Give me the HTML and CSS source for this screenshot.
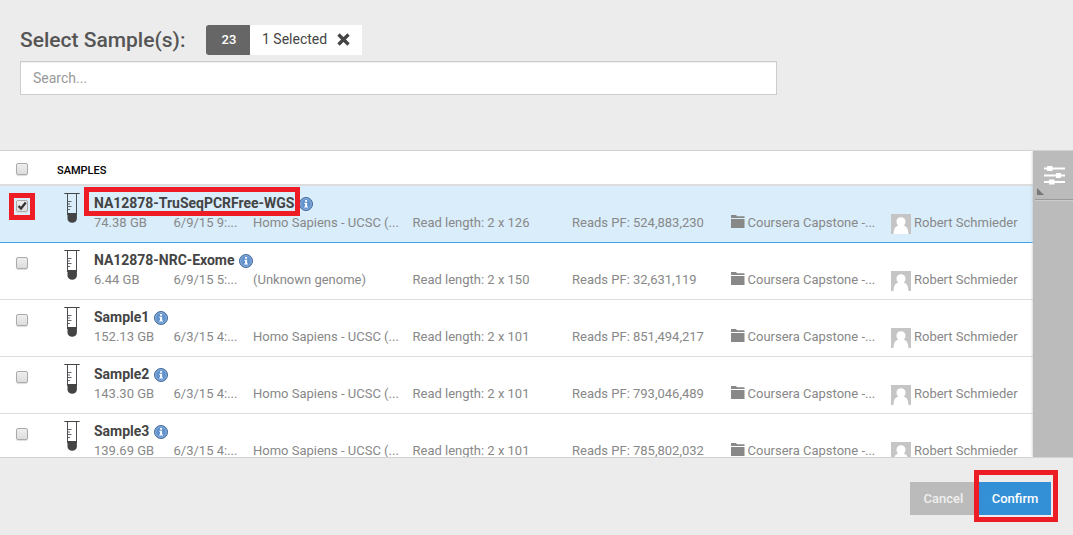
FILE: index.html
```
<!DOCTYPE html>
<html lang="en">
<head>
<meta charset="utf-8">
<title>Select Sample(s)</title>
<link rel="stylesheet" href="styles.css">
</head>
<body>
<svg class="defs" width="0" height="0">
  <symbol id="tube" viewBox="0 0 16 31">
    <path d="M.3 1.500H15.700" stroke="#444" stroke-width="1"/>
    <path d="M3.500 2V23M12.500 2V23" stroke="#4a4f55" stroke-width="1"/>
    <path d="M3.500 21H12.900V26.500a4.700 4.300 0 0 1-9.400 0z" fill="#444"/>
    <path d="M4 9.500H7.500M4 12H6M4 14.500H7.500M4 17.500H6" stroke="#555" stroke-width=".9"/>
  </symbol>
  <symbol id="info" viewBox="0 0 14 14">
    <circle cx="7" cy="7" r="6.500" fill="#4d7fbb" stroke="#456b9c" stroke-width="1"/>
    <circle cx="7" cy="7" r="5.400" fill="#6093cd" stroke="#a9c3e2" stroke-width=".7"/>
    <path d="M6.100 3H8.100V4.700H6.100zM5.300 5.700h2.800v3.700h.9v1.200H5.200V9.400h.9V6.800h-.8z" fill="#fff"/>
  </symbol>
  <symbol id="folder" viewBox="0 0 14 13">
    <path d="M0 0H5L6 1.200H13.500V3H0zM0 4H13.500V13H0z" fill="#888"/>
  </symbol>
  <symbol id="avatar" viewBox="0 0 20 20">
    <path d="M0 0H20V20H0z" fill="#c5c5c5"/>
    <path d="M10 3.200c2.800 0 4.500 1.800 4.500 4.300 0 1.800-.7 3.200-1.700 4.100 2.600.9 4.400 2.600 4.700 8.400H2.500c.3-5.800 2.100-7.500 4.700-8.400-1-.9-1.700-2.300-1.700-4.100C5.500 5 7.200 3.200 10 3.200z" fill="#fff"/>
  </symbol>
</svg>
<div class="dialog">
  <header class="head">
    <div class="title-line">
      <h1 class="title">Select Sample(s):</h1>
      <div class="counter">
        <span class="total">23</span>
        <span class="selected">1 Selected
          <svg class="clear" viewBox="0 0 13 13"><path d="M1.500 1.500L11.500 11.500M11.500 1.500L1.500 11.500" stroke="#444" stroke-width="3.300"/></svg>
        </span>
      </div>
    </div>
    <input class="search" type="text" placeholder="Search...">
  </header>
  <main class="body">
    <div class="list">
      <div class="list-head"><span class="box"></span><span class="label">SAMPLES</span></div>
      <div class="row active">
        <span class="box"><svg class="tick" viewBox="0 0 12 12"><path d="M2.500 6L5 8.500L9.800 2.500" fill="none" stroke="#333" stroke-width="2.300"/></svg></span>
        <svg class="tube"><use href="#tube"/></svg>
        <div class="info">
          <div class="name">NA12878-TruSeqPCRFree-WGS<svg class="i"><use href="#info"/></svg></div>
          <div class="meta"><span>74.38 GB</span><span>6/9/15 9:...</span><span>Homo Sapiens - UCSC (...</span><span>Read length: 2 x 126</span><span>Reads PF: 524,883,230</span><span><svg class="folder"><use href="#folder"/></svg>Coursera Capstone -...</span><span><svg class="avatar"><use href="#avatar"/></svg>Robert Schmieder</span></div>
        </div>
      </div>
      <div class="row">
        <span class="box"></span>
        <svg class="tube"><use href="#tube"/></svg>
        <div class="info">
          <div class="name">NA12878-NRC-Exome<svg class="i"><use href="#info"/></svg></div>
          <div class="meta"><span>6.44 GB</span><span>6/9/15 5:...</span><span>(Unknown genome)</span><span>Read length: 2 x 150</span><span>Reads PF: 32,631,119</span><span><svg class="folder"><use href="#folder"/></svg>Coursera Capstone -...</span><span><svg class="avatar"><use href="#avatar"/></svg>Robert Schmieder</span></div>
        </div>
      </div>
      <div class="row">
        <span class="box"></span>
        <svg class="tube"><use href="#tube"/></svg>
        <div class="info">
          <div class="name">Sample1<svg class="i"><use href="#info"/></svg></div>
          <div class="meta"><span>152.13 GB</span><span>6/3/15 4:...</span><span>Homo Sapiens - UCSC (...</span><span>Read length: 2 x 101</span><span>Reads PF: 851,494,217</span><span><svg class="folder"><use href="#folder"/></svg>Coursera Capstone -...</span><span><svg class="avatar"><use href="#avatar"/></svg>Robert Schmieder</span></div>
        </div>
      </div>
      <div class="row">
        <span class="box"></span>
        <svg class="tube"><use href="#tube"/></svg>
        <div class="info">
          <div class="name">Sample2<svg class="i"><use href="#info"/></svg></div>
          <div class="meta"><span>143.30 GB</span><span>6/3/15 4:...</span><span>Homo Sapiens - UCSC (...</span><span>Read length: 2 x 101</span><span>Reads PF: 793,046,489</span><span><svg class="folder"><use href="#folder"/></svg>Coursera Capstone -...</span><span><svg class="avatar"><use href="#avatar"/></svg>Robert Schmieder</span></div>
        </div>
      </div>
      <div class="row">
        <span class="box"></span>
        <svg class="tube"><use href="#tube"/></svg>
        <div class="info">
          <div class="name">Sample3<svg class="i"><use href="#info"/></svg></div>
          <div class="meta"><span>139.69 GB</span><span>6/3/15 4:...</span><span>Homo Sapiens - UCSC (...</span><span>Read length: 2 x 101</span><span>Reads PF: 785,802,032</span><span><svg class="folder"><use href="#folder"/></svg>Coursera Capstone -...</span><span><svg class="avatar"><use href="#avatar"/></svg>Robert Schmieder</span></div>
        </div>
      </div>
    </div>
    <aside class="side">
      <div class="filter">
        <svg class="sliders" viewBox="0 0 40 47">
          <path d="M11 17.500H32M11 24.500H32M11 31H32" stroke="#fff" stroke-width="2"/>
          <path d="M14 15h5.500v5H14zM23 22h5v5h-5zM16 28.500h5.500v5H16z" fill="#fff"/>
          <path d="M4 37L11 44H4z" fill="#777"/>
        </svg>
      </div>
    </aside>
  </main>
  <footer class="foot"><button class="btn cancel">Cancel</button><button class="btn confirm">Confirm</button></footer>
</div>
<div class="mark mark-check"></div>
<div class="mark mark-name"></div>
<div class="mark mark-confirm"></div>
</body>
</html>
```
FILE: styles.css
```
* { box-sizing: border-box; }
body { margin: 0; font: 13px/18px Roboto, sans-serif; color: #444; background: #ececec; overflow: hidden; }
.defs { display: block; width: 0; height: 0; }
.dialog { width: 1073px; height: 535px; display: flex; flex-direction: column; }
.head { height: 150px; padding: 25px 20px 0; flex: none; }
.title-line { display: flex; height: 30px; margin-bottom: 6px; }
.title { width: 186px; margin: 0; font-size: 21px; line-height: 30px; font-weight: 500; color: #555; white-space: nowrap; }
.counter { display: flex; height: 30px; font-size: 14px; line-height: 28px; }
.total { width: 44px; padding-left: 2px; background: #666; color: #fff; font-size: 13px; line-height: 30px; font-weight: 500; text-align: center; border-radius: 3px 0 0 3px; }
.selected { width: 112px; padding: 0 0 2px 12px; background: #fff; display: flex; align-items: center; white-space: nowrap; font-size: 14px; }
.clear { width: 13px; height: 13px; margin-left: 10px; }
.search { display: block; width: 757px; height: 34px; padding: 0 12px; border: 1px solid #ccc; border-radius: 0; background: #fff; font: 14px Roboto, sans-serif; box-shadow: inset 0 1px 1px #eee; }
.search::placeholder { color: #999; }
.body { display: flex; height: 308px; border: solid #d3d3d3; border-width: 1px 0; overflow: hidden; flex: none; }
.list { width: 1033px; background: #fff; flex: none; }
.list-head { display: flex; height: 35px; border-bottom: 2px solid #ddd; padding-left: 16px; align-items: flex-start; }
.label { margin-left: 29px; line-height: 40px; height: 33px; font-size: 11px; font-weight: 500; color: #000; }
.box { width: 12px; height: 12px; flex: none; border: 1px solid #aaa; border-radius: 2px; background: linear-gradient(#eee, #ddd); box-shadow: 0 1px 1px #ddd; }
.list-head .box { margin-top: 12px; }
.row { display: flex; height: 57px; padding-left: 16px; border-bottom: 1px solid #ddd; overflow: hidden; }
.row .box { margin-top: 14px; }
.row.active { background: #d9edfb; border-color: #3fa4ec; }
.tick { display: block; width: 12px; height: 12px; margin: -1px; }
.tube { width: 16px; height: 31px; margin: 6px 0 0 36px; flex: none; }
.info { margin-left: 14px; padding-top: 8px; }
.name { display: flex; height: 19px; font-size: 14px; line-height: 19px; font-weight: 700; letter-spacing: -.03px; white-space: nowrap; }
.i { width: 14px; height: 14px; margin: 3px 0 0 5px; }
.meta { display: grid; grid-template-columns: 79.500px 79.500px 159.500px 159.500px 158.500px 160.500px 140px; color: #888; line-height: 19px; }
.meta span { display: flex; white-space: nowrap; height: 29px; }
.folder { width: 14px; height: 13px; margin: 2px 3px 0 0; }
.avatar { width: 20px; height: 20px; margin: 1px 3px 0 0; }
.side { width: 40px; background: #bbb; box-shadow: 0 0 3px #bbb; }
.filter { height: 49px; margin-left: 2px; border-bottom: 1px solid #999; box-shadow: 0 1px #ccc; }
.sliders { display: block; width: 40px; height: 47px; margin-left: -2px; }
.foot { display: flex; justify-content: flex-end; padding: 24px 22px 0 0; }
.btn { height: 33px; padding: 0; border: 0; color: #fff; font: 500 13px Roboto, sans-serif; }
.cancel { width: 67px; background: #bbb; color: #f0f0f0; }
.confirm { width: 74px; padding-left: 2px; background: #3490d6; }
.mark { position: absolute; border: 5px solid #ee1c24; }
.mark-check { left: 9px; top: 193px; width: 26px; height: 27px; }
.mark-name { left: 84px; top: 187px; width: 216px; height: 29px; }
.mark-confirm { left: 974px; top: 470px; width: 84px; height: 52px; }
```
